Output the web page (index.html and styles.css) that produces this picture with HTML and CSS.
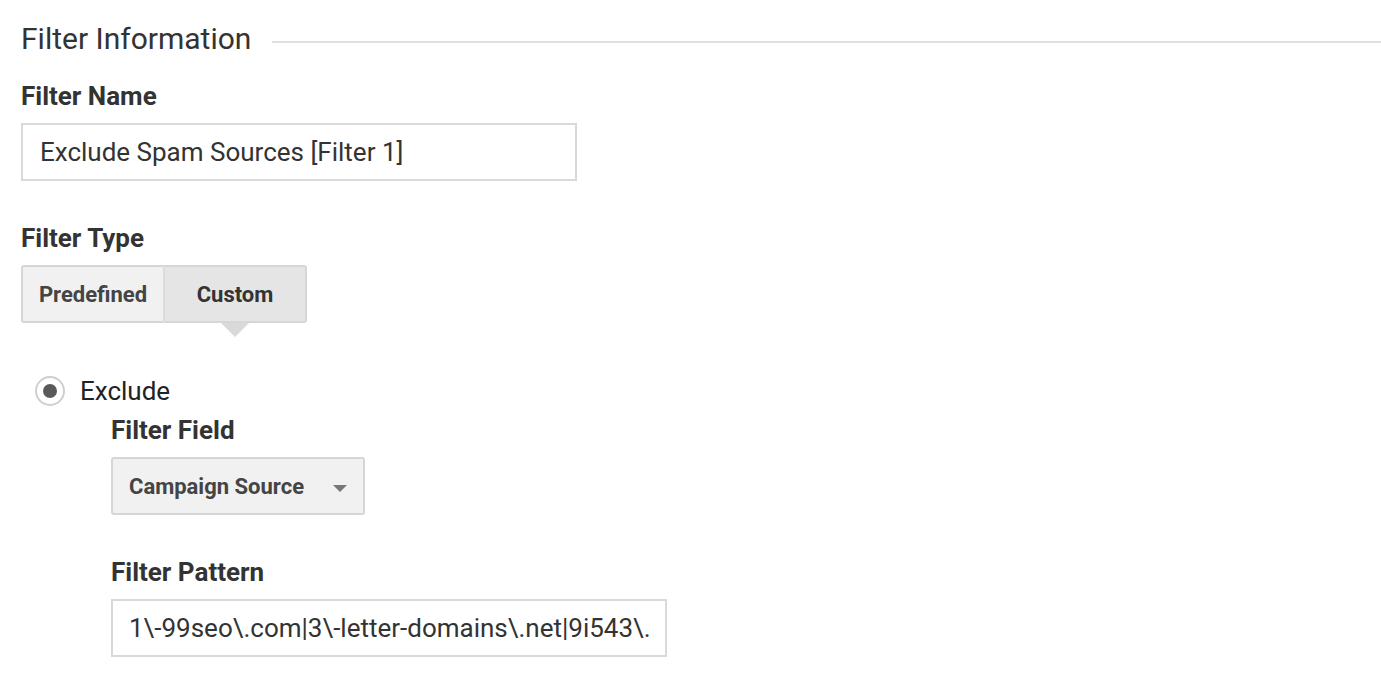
FILE: index.html
```html
<!DOCTYPE html>
<html>
<head>
<meta charset="utf-8">
<link rel="stylesheet" href="styles.css">
</head>
<body>
<div class="page">
  <div class="section-head">
    <span class="section-title">Filter Information</span>
    <span class="section-rule"></span>
  </div>

  <div class="label">Filter Name</div>
  <div class="textbox name-box">Exclude Spam Sources [Filter 1]</div>

  <div class="label type-label">Filter Type</div>
  <div class="toggle">
    <div class="toggle-btn">Predefined</div>
    <div class="toggle-btn active">Custom</div>
  </div>

  <div class="radio-row">
    <span class="radio"><span class="radio-dot"></span></span>
    <span class="radio-text">Exclude</span>
  </div>

  <div class="indent">
    <div class="label">Filter Field</div>
    <div class="select">
      <span>Campaign Source</span>
      <span class="caret"></span>
    </div>

    <div class="label pattern-label">Filter Pattern</div>
    <div class="textbox pattern-box">1\-99seo\.com|3\-letter-domains\.net|9i543\.</div>
  </div>
</div>
</body>
</html>
```
FILE: styles.css
```css
html, body {
  margin: 0;
  padding: 0;
  background: #fff;
}
body {
  font-family: Roboto, "Noto Sans", Arial, sans-serif;
  color: #333;
}
.page {
  padding: 18px 0 0 21px;
}
.section-head {
  display: flex;
  align-items: center;
  gap: 21px;
  height: 40px;
}
.section-title {
  font-size: 30px;
  font-weight: 400;
  color: #333;
  white-space: nowrap;
}
.section-rule {
  flex: 1;
  height: 2px;
  background: #e0e0e0;
  margin-top: 7px;
}
.label {
  font-size: 26px;
  font-weight: 700;
  color: #333;
  line-height: 32px;
  margin-top: 22px;
}
.textbox {
  box-sizing: border-box;
  height: 58px;
  border: 2px solid #d9d9d9;
  font-size: 26px;
  color: #333;
  line-height: 54px;
  padding-left: 17px;
  white-space: nowrap;
  overflow: hidden;
  margin-top: 11px;
}
.name-box {
  width: 556px;
}
.type-label {
  margin-top: 41px;
}
.toggle {
  display: flex;
  margin-top: 11px;
  width: 286px;
}
.toggle-btn {
  position: relative;
  box-sizing: border-box;
  height: 58px;
  width: 143px;
  border: 2px solid #d6d6d6;
  background: #f1f1f1;
  font-size: 22px;
  font-weight: 700;
  color: #444;
  display: flex;
  align-items: center;
  justify-content: center;
}
.toggle-btn:first-child {
  border-radius: 3px 0 0 3px;
  border-right: 1px solid #dcdcdc;
}
.toggle-btn.active {
  background: #e5e5e5;
  color: #333;
  border-left: 1px solid #dcdcdc;
  border-radius: 0 3px 3px 0;
}
.toggle-btn.active::after {
  content: "";
  position: absolute;
  left: 50%;
  bottom: -16px;
  margin-left: -14px;
  border-left: 14px solid transparent;
  border-right: 14px solid transparent;
  border-top: 14px solid #d9d9d9;
}
.radio-row {
  display: flex;
  align-items: center;
  margin-top: 52px;
  margin-left: 14px;
  height: 32px;
}
.radio {
  box-sizing: border-box;
  width: 30px;
  height: 30px;
  border: 2px solid #cfcfcf;
  border-radius: 50%;
  display: flex;
  align-items: center;
  justify-content: center;
}
.radio-dot {
  width: 14px;
  height: 14px;
  border-radius: 50%;
  background: #5a5a5a;
}
.radio-text {
  font-size: 26px;
  color: #222;
  margin-left: 15px;
}
.indent {
  margin-left: 90px;
}
.indent > .label:first-child {
  margin-top: 7px;
}
.select {
  box-sizing: border-box;
  width: 254px;
  height: 58px;
  margin-top: 11px;
  border: 2px solid #d6d6d6;
  border-radius: 3px;
  background: #f1f1f1;
  display: flex;
  align-items: center;
  justify-content: space-between;
  padding: 0 16px 0 16px;
  font-size: 22px;
  font-weight: 700;
  color: #444;
}
.caret {
  width: 0;
  height: 0;
  border-left: 7px solid transparent;
  border-right: 7px solid transparent;
  border-top: 7px solid #777;
  margin-top: 4px;
}
.pattern-label {
  margin-top: 41px;
}
.pattern-box {
  width: 556px;
  padding-left: 16px;
}
```
